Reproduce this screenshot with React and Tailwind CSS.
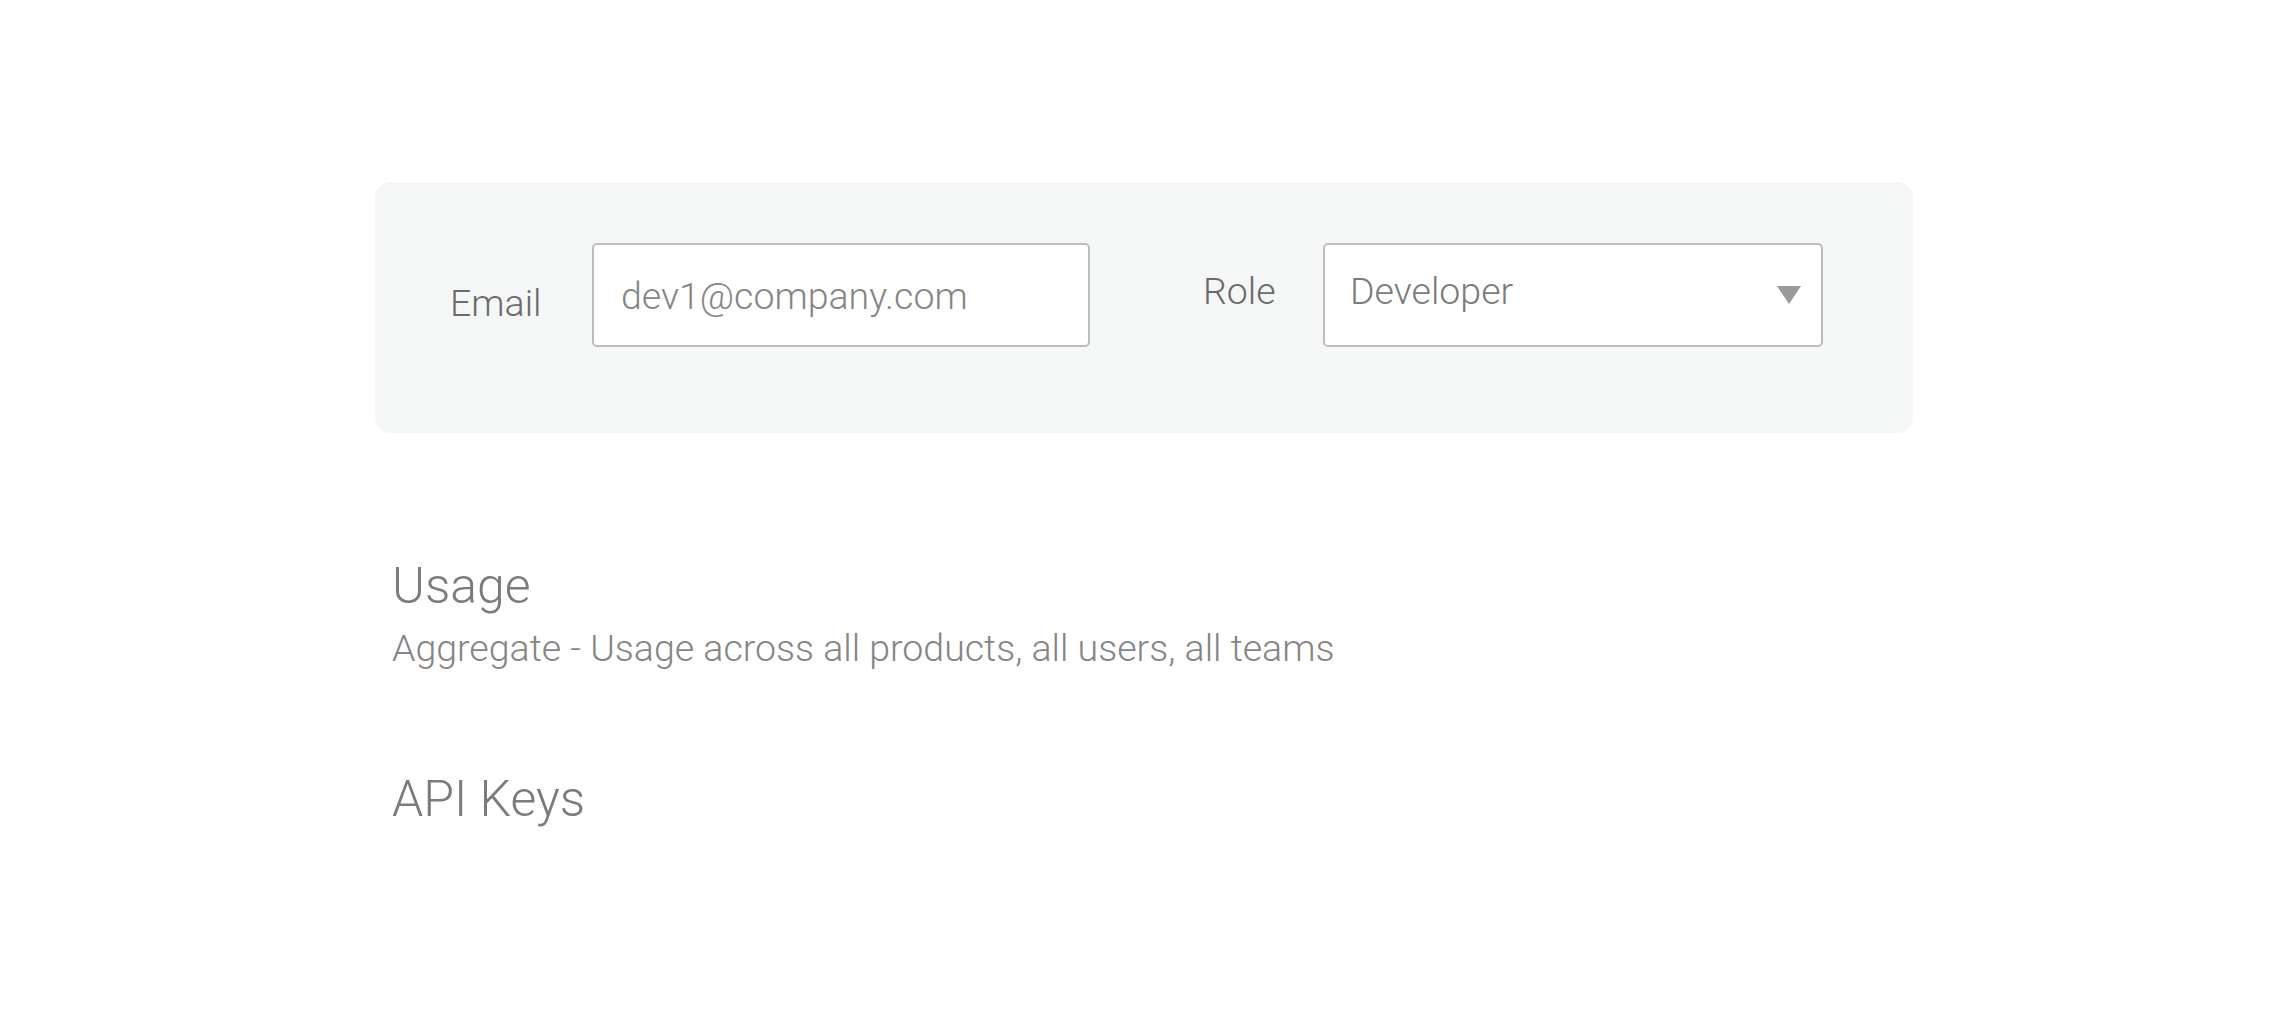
const Caret = () => (
  <svg width="24" height="18" viewBox="0 0 24 18" className="shrink-0">
    <polygon points="0,0 24,0 12,18" fill="#9a9a9a" />
  </svg>
);

const MemberForm = () => (
  <div className="flex h-[251px] w-[1538px] items-start rounded-[16px] bg-[#f5f7f6] pl-[75px] pt-[61px]">
    <label className="mt-[38px] w-[142px] text-[37.5px] leading-[44px] text-[#6b6b6b]">Email</label>
    <div className="flex h-[104px] w-[498px] items-center rounded-[5px] border-2 border-[#bdbdbd] bg-white pl-[27px] pt-[2px]">
      <span className="text-[37.5px] leading-[44px] text-[#858585]">dev1@company.com</span>
    </div>

    <label className="ml-[113px] mt-[26px] w-[120px] text-[37.5px] leading-[44px] text-[#6b6b6b]">Role</label>
    <div className="flex h-[104px] w-[500px] items-center justify-between rounded-[5px] border-2 border-[#bdbdbd] bg-white pl-[25px] pr-[20px]">
      <span className="pb-[8px] text-[37.5px] leading-[44px] text-[#7b7b7b]">Developer</span>
      <Caret />
    </div>
  </div>
);

export default function App() {
  return (
    <div className="min-h-screen bg-white font-['Roboto','Liberation_Sans',sans-serif] font-light">
      <div className="pl-[375px] pt-[182px]">
        <MemberForm />

        <div className="pl-[17px]">
          <h2 className="mt-[124px] text-[50px] font-light leading-[58px] text-[#7b7b7b]">Usage</h2>
          <p className="mt-[11px] text-[37.5px] leading-[44px] text-[#858585]">
            Aggregate - Usage across all products, all users, all teams
          </p>

          <h2 className="mt-[100px] text-[50px] font-light leading-[58px] text-[#7b7b7b]">API Keys</h2>
        </div>
      </div>
    </div>
  );
}
